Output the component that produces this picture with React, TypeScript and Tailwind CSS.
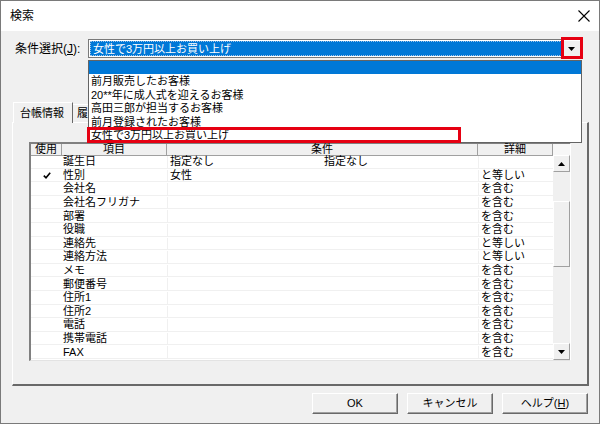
import React from "react";

type Row = {
  use?: boolean;
  item: string;
  cond?: string;
  cond2?: string;
  detail?: string;
};

const rows: Row[] = [
  { item: "誕生日", cond: "指定なし", cond2: "指定なし" },
  { use: true, item: "性別", cond: "女性", detail: "と等しい" },
  { item: "会社名", detail: "を含む" },
  { item: "会社名フリガナ", detail: "を含む" },
  { item: "部署", detail: "を含む" },
  { item: "役職", detail: "を含む" },
  { item: "連絡先", detail: "と等しい" },
  { item: "連絡方法", detail: "と等しい" },
  { item: "メモ", detail: "を含む" },
  { item: "郵便番号", detail: "を含む" },
  { item: "住所1", detail: "を含む" },
  { item: "住所2", detail: "を含む" },
  { item: "電話", detail: "を含む" },
  { item: "携帯電話", detail: "を含む" },
  { item: "FAX", detail: "を含む" },
];

const options = [
  "前月販売したお客様",
  "20**年に成人式を迎えるお客様",
  "高田三郎が担当するお客様",
  "前月登録されたお客様",
  "女性で3万円以上お買い上げ",
];

const Arrow = ({ up = false }: { up?: boolean }) => (
  <svg width="7" height="4" viewBox="0 0 7 4" className={up ? "rotate-180" : ""}>
    <path d="M0 0h7L3.5 4z" fill="#000" />
  </svg>
);

const Button = ({ children }: { children: React.ReactNode }) => (
  <button className="w-[86px] h-[21px] bg-[#f0f0f0] border border-t-white border-l-white border-r-[#696969] border-b-[#696969] shadow-[inset_-1px_-1px_0_#a0a0a0] text-[11px] leading-none text-black flex items-center justify-center">
    {children}
  </button>
);

export default function App() {
  return (
    <div className="w-[600px] h-[424px] border border-[#7a7a7a] bg-[#f0f0f0] flex flex-col font-['Liberation_Sans','Noto_Sans_CJK_JP',sans-serif] text-black select-none overflow-hidden">
      {/* title bar */}
      <div className="h-[30px] bg-white flex items-center justify-between pl-[9px] pr-[9px]">
        <span className="text-[12px] leading-none">検索</span>
        <svg width="12" height="12" viewBox="0 0 12 12">
          <path d="M0.5 0.5l11 11M11.5 0.5l-11 11" stroke="#000" strokeWidth="1.1" />
        </svg>
      </div>

      {/* condition select */}
      <div className="mt-[8px] flex items-center pl-[14px] pr-[17px] h-[19px] relative z-20">
        <label className="w-[73px] text-[12px] leading-none">
          条件選択(<span className="underline">J</span>):
        </label>
        <div className="relative flex-1 h-[19px] border border-[#7a7a7a] bg-white flex p-[1px]">
          <div className="flex-1 bg-[#0078d7] outline outline-1 outline-dotted outline-[#9cc3ea] -outline-offset-1 flex items-center pl-[3px] pt-[1px] text-white text-[11px] leading-none">
            女性で3万円以上お買い上げ
          </div>
          <div className="w-[17px] ml-[1px] bg-[#f0f0f0] flex items-center justify-center">
            <Arrow />
          </div>
          <div className="absolute -right-[2px] -top-[3px] w-[22px] h-[22px] border-[3px] border-[#e60012]" />

          {/* dropdown list */}
          <div className="absolute left-[-1px] right-[-1px] top-[20px] border border-[#646464] bg-white">
            <div className="h-[13px] bg-[#0078d7]" />
            {options.map((o, i) => (
              <div key={o} className="relative h-[13.5px] flex items-center pl-[2px] pt-[2px] text-[11px] leading-none">
                {o}
                {i === options.length - 1 && (
                  <div className="absolute -left-[2px] -top-[1px] w-[374px] h-[16px] border-[3px] border-[#e60012]" />
                )}
              </div>
            ))}
          </div>
        </div>
      </div>

      {/* tabs */}
      <div className="mt-[44px] h-[20px] flex items-end pl-[12px] relative z-10">
        <div className="w-[60px] bg-[#f0f0f0] border-l border-t border-l-white border-t-white border-r border-r-[#696969] -mb-[1px] h-[21px] flex items-center pl-[6px] text-[11px] leading-none">
          台帳情報
        </div>
        <div className="w-[15px] overflow-hidden h-[18px] pl-[4px] flex items-center text-[11px] leading-none border-t border-t-white whitespace-nowrap">
          履
        </div>
      </div>

      {/* panel */}
      <div className="ml-[11px] w-[577px] h-[264px] border-l border-t border-l-white border-t-white border-r-2 border-b-2 border-r-[#696969] border-b-[#696969] pl-[16px] pt-[19px]">
        <div className="w-[542px] h-[219px] border-l-2 border-t-2 border-l-[#808080] border-t-[#808080] border-r border-b border-r-white border-b-[#e3e3e3] bg-white flex flex-col">
          {/* header */}
          <div className="h-[11px] flex text-[11px] leading-none bg-[#f0f0f0] border-b border-[#a0a0a0] box-content -mb-[1px]">
            <div className="w-[31px] border-r border-[#a0a0a0] flex items-center justify-center">使用</div>
            <div className="w-[105px] border-r border-[#a0a0a0] flex items-center justify-center">項目</div>
            <div className="w-[311px] border-r border-[#a0a0a0] flex items-center justify-center">条件</div>
            <div className="w-[75px] border-r border-[#a0a0a0] flex items-center justify-center">詳細</div>
            <div className="w-[17px] bg-[#f7f7f7]" />
          </div>

          {/* body */}
          <div className="flex flex-1">
            <div className="w-[522px] flex flex-col">
              {rows.map((r) => (
                <div key={r.item} className="h-[13.6px] flex pt-[1px] text-[11px] leading-none border-b border-[#f0f0f0]">
                  <div className="w-[31px] flex items-center justify-center">
                    {r.use && (
                      <svg width="8" height="7" viewBox="0 0 8 7">
                        <path d="M0.8 3.6L3 5.8L7.2 0.8" stroke="#000" strokeWidth="1.6" fill="none" />
                      </svg>
                    )}
                  </div>
                  <div className="w-[105px] flex items-center pl-[1px]">{r.item}</div>
                  <div className="w-[311px] flex items-center pl-[2px] border-l border-[#f0f0f0]">
                    <span className="w-[154px]">{r.cond}</span>
                    <span>{r.cond2}</span>
                  </div>
                  <div className="w-[75px] flex items-center pl-[2px] border-l border-[#f0f0f0]">{r.detail}</div>
                </div>
              ))}
            </div>

            {/* scrollbar */}
            <div className="w-[17px] flex flex-col bg-[#f0f0f0]">
              <div className="h-[17px] flex items-center justify-center border-r border-b border-r-[#a0a0a0] border-b-[#a0a0a0] border-l border-t border-l-white border-t-white">
                <Arrow up />
              </div>
              <div className="h-[29px]" />
              <div className="h-[66px] bg-[#f0f0f0] border border-t-white border-l-white border-r-[#a0a0a0] border-b-[#a0a0a0]" />
              <div className="flex-1" />
              <div className="h-[17px] flex items-center justify-center border-r border-b border-r-[#a0a0a0] border-b-[#a0a0a0] border-l border-t border-l-white border-t-white">
                <Arrow />
              </div>
            </div>
          </div>
        </div>
      </div>

      {/* buttons */}
      <div className="mt-[7px] flex justify-end gap-[9px] pr-[11px]">
        <Button>OK</Button>
        <Button>キャンセル</Button>
        <Button>
          ヘルプ(<span className="underline">H</span>)
        </Button>
      </div>
    </div>
  );
}
